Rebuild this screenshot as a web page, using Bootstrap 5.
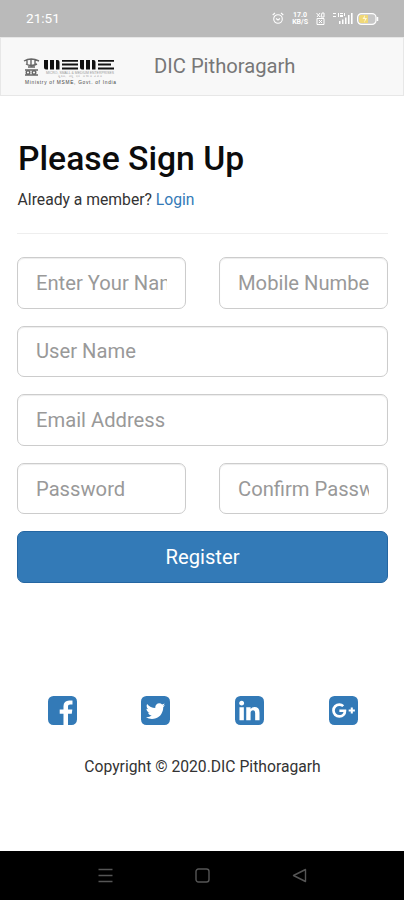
<!DOCTYPE html>
<html lang="en">
<head>
<meta charset="utf-8">
<meta name="viewport" content="width=device-width, initial-scale=1">
<title>DIC Pithoragarh</title>
<link href="https://cdn.jsdelivr.net/npm/bootstrap@5.3.0/dist/css/bootstrap.min.css" rel="stylesheet">
<style>
body{font-family:Roboto,"Liberation Sans",sans-serif;font-size:15.7px;color:#333;background:#fff;height:900px;overflow:hidden}
svg{display:block;flex:none}
.statusbar{height:37px;background:#bababa;color:#fff;padding:0 25px 0 26px;font-size:13.6px}
.rate{font-size:7px;line-height:6.5px;font-weight:700}
.topnav{height:59px;background:#f8f8f8;border:1px solid #e7e7e7;padding:0 0 0 22px}
.logo{margin-top:17px}
.brand-name{font-size:20.2px;color:#777;margin-left:35px;line-height:56px}
.page{padding:44px 16px 0 17px}
.title{font-size:33.7px;line-height:38px;font-weight:500;color:#0c0c0c;padding-left:1px}
.sub{line-height:22px;margin-top:11px;padding-left:.6px}
.sub a{color:#337ab7}
.rule{height:1px;background:#eee;margin:22px 0 23px}
.fields{display:grid;grid-template-columns:169px 169px;column-gap:33px;row-gap:17px}
.wide{grid-column:1/-1}
.field.form-control{height:51.6px;font-size:20.2px;padding:0 18px;border:1px solid #ccc;border-radius:7px;box-shadow:inset 0 1px 1px rgba(0,0,0,.075);min-width:0}
.field::placeholder{color:#999;opacity:1}
.register.btn{height:51.5px;background:#337ab7;border:1px solid #2466a2;color:#fff;font-size:20.2px;border-radius:7px;padding:0}
.social{margin-top:113.500px;padding:0 30px 0 30.500px}
.copy{margin-top:30.500px;line-height:22px}
.softkeys{height:49px;background:#000;padding:0 97px 0 98px}
</style>
<script src="https://cdn.jsdelivr.net/npm/bootstrap@5.3.0/dist/js/bootstrap.bundle.min.js"></script>
</head>
<body class="d-flex flex-column">
<div class="statusbar d-flex align-items-center justify-content-between flex-shrink-0">
  <span>21:51</span>
  <div class="d-flex align-items-center">
    <svg width="12" height="13" viewBox="0 0 12 13" fill="none" stroke="#fff" stroke-width="1.1"><circle cx="6" cy="7" r="4.3"/><path d="M.7 3 3 1M11.300 3 9 1M4 6.500 6 8l2-1.500"/></svg>
    <div class="rate text-center ms-2"><div>17.0</div><div>KB/S</div></div>
    <svg class="ms-2" width="9" height="13" viewBox="0 0 9 13" fill="none" stroke="#fff" stroke-width="1"><path d="M.5 1 4 5M4 1 1 5M6 1h2v4H5zM1 6.500h7v6H1zM3 8l3 3M6 8l-3 3"/></svg>
    <svg class="mx-1 ps-1" width="24" height="13" viewBox="0 0 20 13" fill="#fff"><path d="M0 1h3v1H0zM0 4h3v1H0zM5 1h1v4H5zM7 1h3v1H7zM7 3h3v2H7zM11 1h1v3h-1zM6 9h1.500v3H6zM9 7.500h1.500V12H9zM12 5.500h1.500V12H12zM15 3h1.500v9H15zM18 1h1.600v11H18z"/></svg>
    <svg width="22" height="12" viewBox="0 0 22 12"><rect x=".6" y=".6" width="18.400" height="10.800" rx="4" fill="#c6c6c6" stroke="#fff" stroke-width="1.200"/><path d="M4 2h7v8H4q-2 0-2-2V4q0-2 2-2z" fill="#f0d878"/><path d="M8 2 5.500 6H8l-1 4 3-5H7.700z" fill="#fff8d5"/><path d="M20.500 4v4" stroke="#fff" stroke-width="1.500"/></svg>
  </div>
</div>
<nav class="topnav d-flex flex-shrink-0">
  <svg class="logo" width="96" height="34" viewBox="0 0 96 34">
    <g fill="none" stroke="#666" stroke-width="1.400"><path d="M1 6q7-4 15 0M3 9q5 3 11 0M4 5v5M8 4v8M12 5v5M5 12h7M2 15h13M2 20h13"/><circle cx="5" cy="17.500" r="1.800"/><circle cx="11" cy="17.500" r="1.800"/></g>
    <g fill="#111"><path d="M21 5h4v9.500H23q-2 0-2-2zM27 5h4v9.500H27zM33 5h1.500q2 0 2 2v7.500H33zM57 5h4v9.500H59q-2 0-2-2zM63 5h4v9.500H63zM69 5h1.500q2 0 2 2v7.500H69z"/><path d="M39 5h16v1.700H39zM39 8.600h16v1.900H39zM39 12.600h16v1.900H39zM75 5h16v1.700H75zM75 8.600h13v1.900H75zM75 12.600h16v1.900H75z"/></g>
    <g fill="#999" font-family="Liberation Sans, sans-serif" text-anchor="middle"><text x="57" y="19" font-size="3.400" textLength="68">MICRO, SMALL &amp; MEDIUM ENTERPRISES</text><text x="57" y="22" font-size="3" textLength="44">सूक्ष्म, लघु एवं मध्यम उद्यम</text></g>
    <text x="2" y="29" font-family="Liberation Sans, sans-serif" font-size="4.800" fill="#444" textLength="91">Ministry of MSME, Govt. of India</text>
  </svg>
  <span class="brand-name">DIC Pithoragarh</span>
</nav>
<main class="page flex-grow-1">
  <h1 class="title mb-0">Please Sign Up</h1>
  <p class="sub mb-0">Already a member? <a href="#" class="text-decoration-none">Login</a></p>
  <div class="rule"></div>
  <form class="fields">
    <input class="form-control field" placeholder="Enter Your Name">
    <input class="form-control field" placeholder="Mobile Number">
    <input class="form-control field wide" placeholder="User Name">
    <input class="form-control field wide" placeholder="Email Address">
    <input class="form-control field" type="password" placeholder="Password">
    <input class="form-control field" type="password" placeholder="Confirm Password">
    <button type="button" class="btn register wide">Register</button>
  </form>
  <div class="social d-flex justify-content-between">
    <svg width="29" height="29" viewBox="0 128 1536 1536" fill="#337ab7"><path d="M1248 128q119 0 203.500 84.500t84.500 203.500v960q0 119-84.500 203.500t-203.500 84.500h-188v-595h199l30-232h-229v-148q0-56 23.500-84t91.500-28l122-1v-207q-63-9-178-9-136 0-217.500 80t-81.500 226v171h-200v232h200v595h-532q-119 0-203.500-84.500t-84.500-203.500v-960q0-119 84.500-203.500t203.500-84.500h960z"/></svg>
    <svg width="29" height="29" viewBox="128 128 1536 1536"><rect x="128" y="128" width="1536" height="1536" rx="288" fill="#337ab7"/><path fill="#fff" d="M1408 610q-56 25-121 34 68-40 93-117-65 38-134 51-61-66-153-66-87 0-148.500 61.500t-61.500 148.500q0 29 5 48-129-7-242-65t-192-155q-29 50-29 106 0 114 91 175-47-1-100-26v2q0 75 50 133.500t123 72.500q-29 8-51 8-13 0-39-4 21 63 74.500 104t121.500 42q-116 90-261 90-26 0-50-3 148 94 322 94 112 0 210-35.500t168-95 120.500-137 75-162 24.500-168.500q0-18-1-27 63-45 105-109z"/></svg>
    <svg width="29" height="29" viewBox="128 128 1536 1536"><rect x="128" y="128" width="1536" height="1536" rx="288" fill="#337ab7"/><path fill="#fff" d="M365 1414h231v-694h-231v694zm246-908q-1-52-36-86t-93-34-94.500 34-36.500 86q0 51 35.500 85.500t92.500 34.500h1q59 0 95-34.500t36-85.500zm585 908h231v-398q0-154-73-233t-193-79q-136 0-209 117h2v-101h-231q3 66 0 694h231v-388q0-38 7-56 15-35 45-59.500t74-24.500q116 0 116 157v371z"/></svg>
    <svg width="29" height="29" viewBox="128 128 1536 1536"><rect x="128" y="128" width="1536" height="1536" rx="288" fill="#337ab7"/><path fill="#fff" d="M1045 905q0-26-6-64h-362v132h217q-3 24-16.500 50t-37.500 53-66.500 44.500-96.500 17.500q-99 0-169-71t-70-171 70-171 169-71q92 0 153 59l104-101q-108-100-257-100-160 0-272 112.500t-112 271.500 112 271.500 272 112.500q165 0 266.500-105t101.500-270zm345 46h109v-110h-109v-110h-110v110h-110v110h110v110h110v-110z"/></svg>
  </div>
  <p class="copy text-center mb-0">Copyright © 2020.DIC Pithoragarh</p>
</main>
<footer class="softkeys d-flex align-items-center justify-content-between flex-shrink-0">
  <svg width="15" height="15" viewBox="0 0 15 15" stroke="#555" stroke-width="1.400"><path d="M.5 1.500h14M.5 7.500h14M.5 13.500h14"/></svg>
  <svg width="15" height="15" viewBox="0 0 15 15" fill="none" stroke="#555" stroke-width="1.400"><rect x="1" y="1" width="13" height="13" rx="2.500"/></svg>
  <svg width="15" height="15" viewBox="0 0 15 15" fill="none" stroke="#555" stroke-width="1.400" stroke-linejoin="round"><path d="M13.500 1.500v12L1.500 7.500z"/></svg>
</footer>
</body>
</html>
